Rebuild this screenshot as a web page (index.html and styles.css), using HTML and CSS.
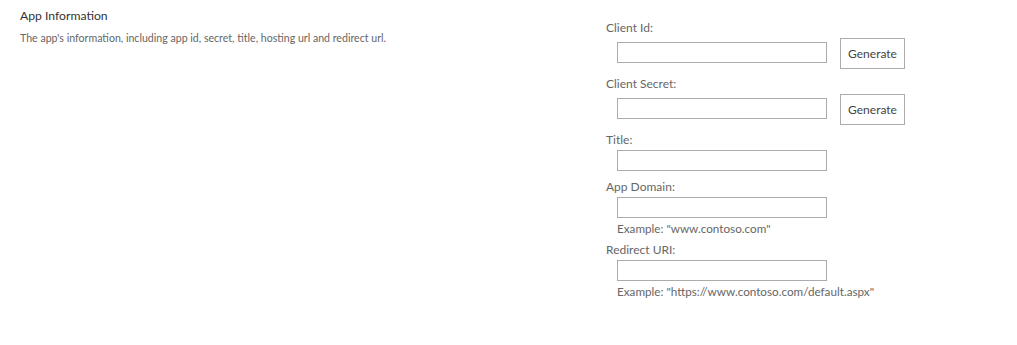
FILE: index.html
```html
<!DOCTYPE html>
<html lang="en">
<head>
    <meta charset="UTF-8">
    <title>App Information</title>
    <link rel="stylesheet" href="styles.css">
</head>
<body>
    <div class="page">
        <section class="intro">
            <h2 class="intro-title">App Information</h2>
            <p class="intro-desc">The app's information, including app id, secret, title, hosting url and redirect url.</p>
        </section>

        <form class="fields">
            <div class="field field-action">
                <label class="field-label">Client Id:</label>
                <div class="control">
                    <input class="text-box" type="text">
                    <button class="btn" type="button">Generate</button>
                </div>
            </div>
            <div class="field field-action">
                <label class="field-label">Client Secret:</label>
                <div class="control">
                    <input class="text-box" type="text">
                    <button class="btn" type="button">Generate</button>
                </div>
            </div>
            <div class="field">
                <label class="field-label">Title:</label>
                <div class="control">
                    <input class="text-box" type="text">
                </div>
            </div>
            <div class="field has-hint">
                <label class="field-label">App Domain:</label>
                <div class="control">
                    <input class="text-box" type="text">
                </div>
                <div class="hint">Example: "www.contoso.com"</div>
            </div>
            <div class="field has-hint">
                <label class="field-label">Redirect URI:</label>
                <div class="control">
                    <input class="text-box" type="text">
                </div>
                <div class="hint">Example: "https://www.contoso.com/default.aspx"</div>
            </div>
        </form>
    </div>
</body>
</html>
```

FILE: styles.css
```css
body {
    margin: 0;
    background: #fff;
    font-family: Lato, "Open Sans", sans-serif;
    color: #666;
}
.page {
    display: flex;
    padding-top: 6px;
}
.intro {
    width: 606px;
    padding-left: 20px;
    box-sizing: border-box;
}
.intro-title {
    margin: 0;
    font-size: 12.2px;
    font-weight: 400;
    line-height: 20px;
    color: #333;
}
.intro-desc {
    margin: 4px 0 0;
    font-size: 10.6px;
    line-height: 16px;
    color: #666;
}
.fields {
    margin: 0;
    padding-top: 12px;
}
.field {
    margin-bottom: 6px;
}
.field-action {
    margin-bottom: 5px;
}
.field.has-hint {
    margin-bottom: 2px;
}
.field-label {
    display: block;
    font-size: 12px;
    line-height: 20px;
    color: #666;
}
.control {
    display: flex;
    align-items: flex-start;
    padding-left: 11px;
}
.text-box {
    width: 210px;
    height: 21px;
    box-sizing: border-box;
    margin: 0;
    border: 1px solid #ababab;
    padding: 0 4px;
    font: inherit;
    background: #fff;
}
.field-action .text-box {
    margin-top: 4px;
}
.btn {
    margin-left: 13px;
    width: 65px;
    height: 31px;
    box-sizing: border-box;
    border: 1px solid #ababab;
    background: #fff;
    padding: 0;
    font-family: inherit;
    font-size: 12px;
    color: #444;
}
.hint {
    padding-left: 11px;
    font-size: 11.7px;
    line-height: 20px;
    color: #666;
}
```
